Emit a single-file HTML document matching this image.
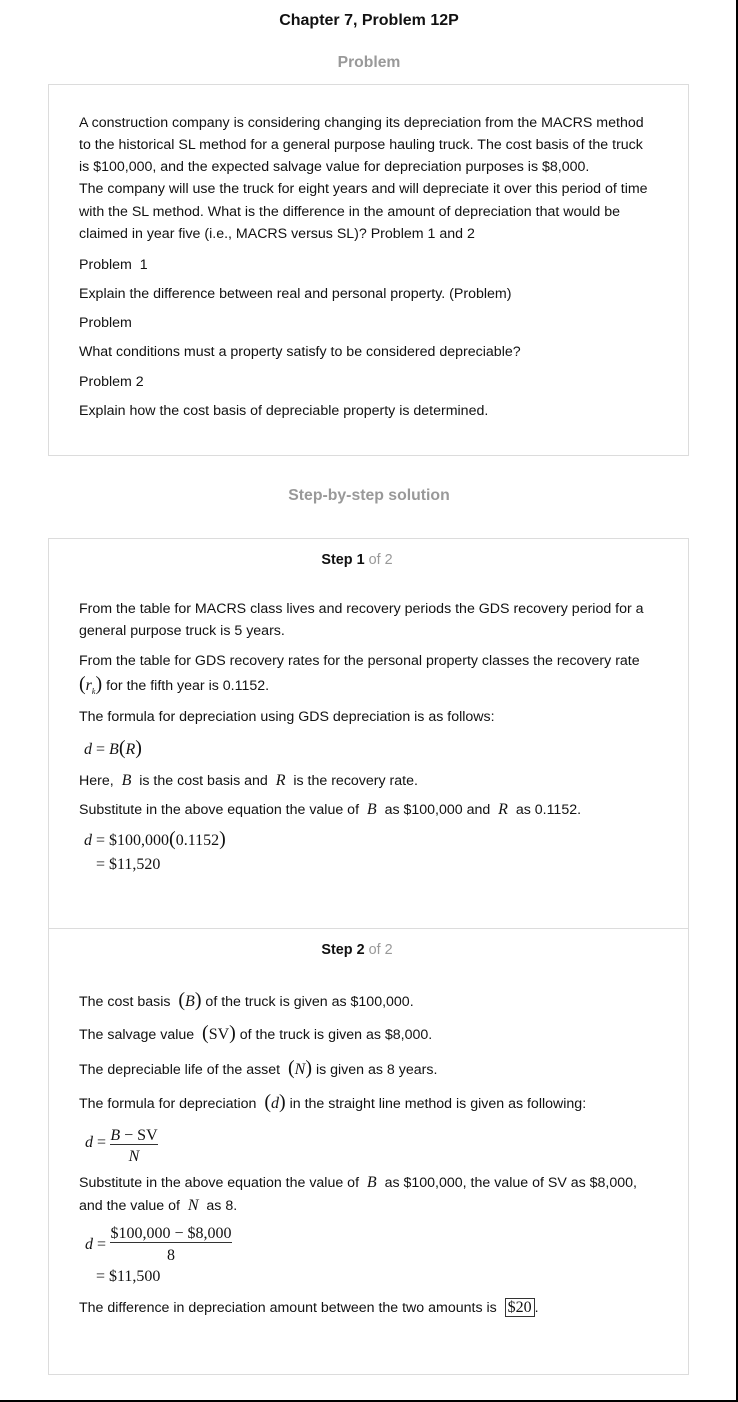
<!DOCTYPE html>
<html><head><meta charset="utf-8"><style>
body{margin:0;width:738px;height:1402px;background:#fff;position:relative;overflow:hidden;font-family:"Liberation Sans",sans-serif;color:#111}
.t{position:absolute;left:79px;font-size:14.2px;line-height:16px;white-space:nowrap}
.c{position:absolute;left:0;width:738px;text-align:center;white-space:nowrap}
.box{position:absolute;left:48px;width:639px;border:1px solid #dcdcdc}
.m{font-family:"Liberation Serif",serif;font-size:16px}
.i{font-style:italic}
.p{font-family:"Liberation Serif",serif;font-size:20px;font-weight:lighter}
</style></head><body>
<div style="position:absolute;left:736px;top:0;width:2px;height:1402px;background:#000"></div>
<div style="position:absolute;left:0;top:1400px;width:738px;height:2px;background:#000"></div>

<div class="c" style="top:12px;font-size:16px;font-weight:bold;line-height:18px">Chapter 7, Problem 12P</div>
<div class="c" style="top:54px;font-size:15.7px;font-weight:bold;color:#999;line-height:18px">Problem</div>
<div class="box" style="top:84px;height:370px"></div>
<div class="t" style="top:115px">A construction company is considering changing its depreciation from the MACRS method</div>
<div class="t" style="top:137px">to the historical SL method for a general purpose hauling truck. The cost basis of the truck</div>
<div class="t" style="top:159px">is $100,000, and the expected salvage value for depreciation purposes is $8,000.</div>
<div class="t" style="top:181px">The company will use the truck for eight years and will depreciate it over this period of time</div>
<div class="t" style="top:204px">with the SL method. What is the difference in the amount of depreciation that would be</div>
<div class="t" style="top:226px">claimed in year five (i.e., MACRS versus SL)? Problem 1 and 2</div>
<div class="t" style="top:257px">Problem &nbsp;1</div>
<div class="t" style="top:286px">Explain the difference between real and personal property. (Problem)</div>
<div class="t" style="top:315px">Problem</div>
<div class="t" style="top:344px">What conditions must a property satisfy to be considered depreciable?</div>
<div class="t" style="top:374px">Problem 2</div>
<div class="t" style="top:403px">Explain how the cost basis of depreciable property is determined.</div>

<div class="c" style="top:487px;font-size:15.8px;font-weight:bold;color:#999;line-height:18px">Step-by-step solution</div>
<div class="box" style="top:538px;height:835px"></div>
<div style="position:absolute;left:49px;top:928px;width:639px;height:1px;background:#dcdcdc"></div>

<div class="c" style="top:552px;font-size:14.4px;line-height:16px;left:-12px"><b>Step 1</b> <span style="color:#999">of 2</span></div>
<div class="t" style="top:601px">From the table for MACRS class lives and recovery periods the GDS recovery period for a</div>
<div class="t" style="top:623px">general purpose truck is 5 years.</div>
<div class="t" style="top:653px">From the table for GDS recovery rates for the personal property classes the recovery rate</div>
<div class="t" style="top:676px"><span class="p">(</span><span class="m i">r<sub style="font-size:8px">k</sub></span><span class="p">)</span> for the fifth year is 0.1152.</div>
<div class="t" style="top:709px">The formula for depreciation using GDS depreciation is as follows:</div>
<div class="t" style="top:740px;left:84px"><span class="m"><i>d</i> = <i>B</i></span><span class="p">(</span><span class="m i">R</span><span class="p">)</span></div>
<div class="t" style="top:773px">Here, &nbsp;<span class="m i">B</span>&nbsp; is the cost basis and &nbsp;<span class="m i">R</span>&nbsp; is the recovery rate.</div>
<div class="t" style="top:802px">Substitute in the above equation the value of &nbsp;<span class="m i">B</span>&nbsp; as $100,000 and &nbsp;<span class="m i">R</span>&nbsp; as 0.1152.</div>
<div class="t" style="top:831px;left:84px"><span class="m"><i>d</i> = $100,000</span><span class="p">(</span><span class="m">0.1152</span><span class="p">)</span></div>
<div class="t" style="top:857px;left:96px"><span class="m">= $11,520</span></div>

<div class="c" style="top:942px;font-size:14.4px;line-height:16px;left:-12px"><b>Step 2</b> <span style="color:#999">of 2</span></div>
<div class="t" style="top:992px">The cost basis &nbsp;<span class="p">(</span><span class="m i">B</span><span class="p">)</span> of the truck is given as $100,000.</div>
<div class="t" style="top:1025px">The salvage value &nbsp;<span class="p">(</span><span class="m">SV</span><span class="p">)</span> of the truck is given as $8,000.</div>
<div class="t" style="top:1060px">The depreciable life of the asset &nbsp;<span class="p">(</span><span class="m i">N</span><span class="p">)</span> is given as 8 years.</div>
<div class="t" style="top:1094px">The formula for depreciation &nbsp;<span class="p">(</span><span class="m i">d</span><span class="p">)</span> in the straight line method is given as following:</div>
<div class="t m" style="top:1135px;left:85px"><i>d</i> =</div>
<div class="t m" style="top:1128px;left:110px;width:48px;text-align:center;border-bottom:1px solid #333;line-height:15px;padding-bottom:1px"><i>B</i> − SV</div>
<div class="t m i" style="top:1149px;left:110px;width:48px;text-align:center">N</div>
<div class="t" style="top:1175px">Substitute in the above equation the value of &nbsp;<span class="m i">B</span>&nbsp; as $100,000, the value of SV as $8,000,</div>
<div class="t" style="top:1198px">and the value of &nbsp;<span class="m i">N</span>&nbsp; as 8.</div>
<div class="t m" style="top:1237px;left:85px"><i>d</i> =</div>
<div class="t m" style="top:1226px;left:110px;width:122px;text-align:center;border-bottom:1px solid #333;line-height:15px;padding-bottom:1px">$100,000 − $8,000</div>
<div class="t m" style="top:1248px;left:110px;width:122px;text-align:center">8</div>
<div class="t m" style="top:1269px;left:96px">= $11,500</div>
<div class="t" style="top:1300px">The difference in depreciation amount between the two amounts is &nbsp;<span class="m" style="border:1px solid #333;padding:0 2px">$20</span>.</div>
</body></html>
